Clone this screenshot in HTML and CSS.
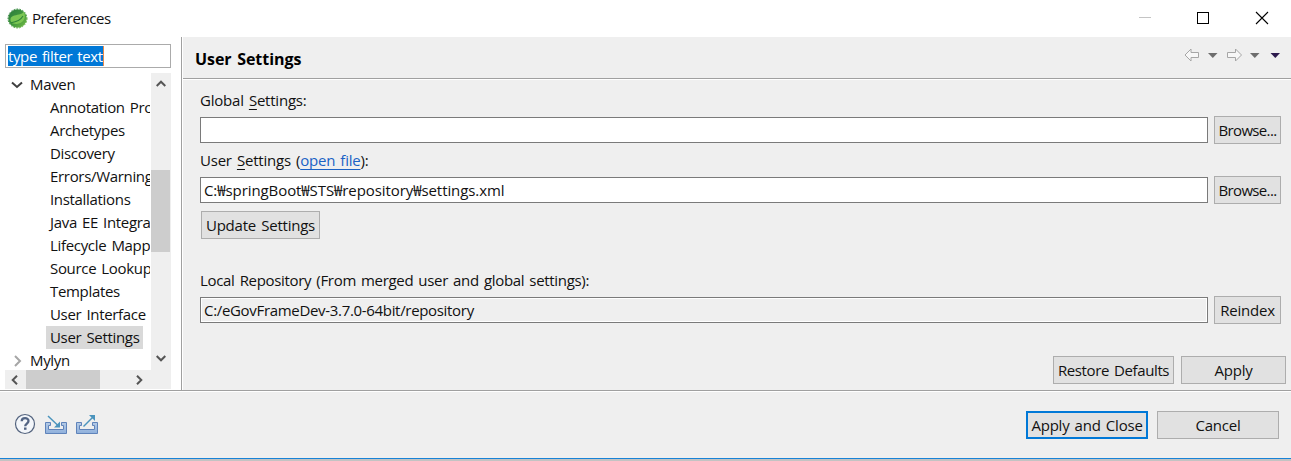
FILE: index.html
```html
<!DOCTYPE html>
<html lang="en">
<head>
<meta charset="utf-8">
<title>Preferences</title>
<link rel="stylesheet" href="styles.css">
</head>
<body>
<div class="window">
  <header class="titlebar">
    <svg class="logo" width="21" height="21" viewBox="0 0 21 21">
      <defs><linearGradient id="leaf" x1="0" y1="0" x2="1" y2="1"><stop offset="0" stop-color="#2a7a3c"/><stop offset=".5" stop-color="#3f963d"/><stop offset="1" stop-color="#76bd45"/></linearGradient></defs>
      <circle cx="10.5" cy="10.5" r="9.3" fill="url(#leaf)"/>
      <circle cx="10.5" cy="10.5" r="9.5" fill="none" stroke="url(#leaf)" stroke-width="1" stroke-dasharray="1.6 1.3"/>
      <path d="M3.500 12.500C3 7.500 8 7.500 12 6.500C14.500 6 16 5 17 3.500C19.500 10 16.500 15.500 9.500 16C7 16 5 15.500 4.500 14.800Z" fill="#7cc653"/>
      <path d="M4 14.700C9 14 13.500 12.500 16 8" fill="none" stroke="#2f8439" stroke-width="1.100"/>
    </svg>
    <span class="t-title">Preferences</span>
    <svg class="winbtns" width="130" height="14" viewBox="0 0 130 14" fill="none" shape-rendering="crispEdges">
      <path d="M0 6.500H12" stroke="#c4c4c4"/>
      <rect x="58.500" y="1.500" width="11" height="11" stroke="#000"/>
      <path d="M117 1L129 13M129 1L117 13" stroke="#000" shape-rendering="auto" stroke-width="1.100"/>
    </svg>
  </header>
  <div class="body">
    <aside class="sidebar">
      <div class="filter"><span class="selected-text">type filter text</span></div>
      <div class="tree-wrap">
        <div class="tree">
          <div class="row parent"><svg width="12" height="8" viewBox="0 0 12 8"><path d="M1 1.500L6 6L11 1.500" fill="none" stroke="#404040" stroke-width="2"/></svg><span>Maven</span></div>
          <div class="row"><span>Annotation Processing</span></div>
          <div class="row"><span>Archetypes</span></div>
          <div class="row"><span>Discovery</span></div>
          <div class="row"><span>Errors/Warnings</span></div>
          <div class="row"><span>Installations</span></div>
          <div class="row"><span>Java EE Integration</span></div>
          <div class="row"><span>Lifecycle Mappings</span></div>
          <div class="row"><span>Source Lookup</span></div>
          <div class="row"><span>Templates</span></div>
          <div class="row"><span>User Interface</span></div>
          <div class="row"><span class="current">User Settings</span></div>
          <div class="row parent"><svg width="12" height="12" viewBox="0 0 12 12"><path d="M4 1L9 6L4 11" fill="none" stroke="#a6a6a6" stroke-width="2"/></svg><span>Mylyn</span></div>
        </div>
        <div class="vscroll">
          <svg width="10" height="7" viewBox="0 0 10 7"><path d="M.7 6L5 1.700L9.300 6" fill="none" stroke="#555" stroke-width="2"/></svg>
          <div class="vthumb"></div>
          <svg width="10" height="7" viewBox="0 0 10 7"><path d="M.7 1L5 5.300L9.300 1" fill="none" stroke="#555" stroke-width="2"/></svg>
        </div>
      </div>
      <div class="hscroll">
        <svg width="7" height="10" viewBox="0 0 7 10"><path d="M6 .7L1.700 5L6 9.300" fill="none" stroke="#555" stroke-width="2"/></svg>
        <div class="hthumb"></div>
        <svg width="7" height="10" viewBox="0 0 7 10"><path d="M1 .7L5.300 5L1 9.300" fill="none" stroke="#555" stroke-width="2"/></svg>
      </div>
    </aside>
    <main class="page">
      <div class="page-head">
        <h1>User Settings</h1>
        <svg width="98" height="14" viewBox="0 0 98 14">
          <path d="M1 7L7 1V4.500H14.500V9.500H7V13Z" fill="#f7f7f7" stroke="#a6a6a6" stroke-linejoin="round"/>
          <path d="M24 5H33.500L28.800 10Z" fill="#6d6d6d"/>
          <path d="M57.500 7L51.500 1V4.500H43.500V9.500H51.500V13Z" fill="#f7f7f7" stroke="#a6a6a6" stroke-linejoin="round"/>
          <path d="M66 5H75.500L70.800 10Z" fill="#6d6d6d"/>
          <path d="M86.500 5H96L91.300 10Z" fill="#2c1a4d"/>
        </svg>
      </div>
      <div class="form">
        <label>Global <u>S</u>ettings:</label>
        <div class="line"><div class="input"></div><button class="side-btn browse">Browse...</button></div>
        <label>User <u>S</u>ettings (<a>open file</a>):</label>
        <div class="line"><div class="input t-path">C:₩springBoot₩STS₩repository₩settings.xml</div><button class="side-btn browse">Browse...</button></div>
        <button class="update">Update Settings</button>
        <label class="t-local">Local Repository (From merged user and global settings):</label>
        <div class="line"><div class="input readonly t-repo">C:/eGovFrameDev-3.7.0-64bit/repository</div><button class="side-btn">Reindex</button></div>
      </div>
      <div class="page-actions">
        <button class="restore">Restore Defaults</button><button class="apply">Apply</button>
      </div>
    </main>
  </div>
  <footer class="footer">
    <svg class="tools" width="86" height="22" viewBox="0 0 86 22">
      <defs><linearGradient id="tray" x1="0" y1="0" x2="0" y2="1"><stop offset="0" stop-color="#b5cbe6"/><stop offset="1" stop-color="#8fb0dc"/></linearGradient></defs>
      <circle cx="11" cy="11" r="9.500" fill="#f3f6fa" stroke="#53637e" stroke-width="1.200"/>
      <path d="M7.700 8.300C7.700 4.200 14.500 4.200 14.500 8C14.500 10.500 11.200 10.700 11.200 13.300" fill="none" stroke="#526484" stroke-width="2.300"/>
      <rect x="10" y="14.500" width="2.500" height="2.300" fill="#526484"/>
      <g fill="url(#tray)" stroke="#5f83ba" stroke-width="1">
        <path d="M31.500 9.500H36.500V12.500H34.500V16.500H49.500V12.500H47.500V9.500H52.500V20.500H31.500Z"/>
        <path d="M62.500 9.500H67.500V12.500H65.500V16.500H80.500V12.500H78.500V9.500H83.500V20.500H62.500Z"/>
      </g>
      <path d="M34 3L44.500 13" fill="none" stroke="#4b94bd" stroke-width="1.500"/>
      <path d="M46 14.500H40L46 8.500Z" fill="#4b94bd"/>
      <path d="M69.500 13.500L79 4" fill="none" stroke="#4b94bd" stroke-width="1.500"/>
      <path d="M81 2H75L81 8Z" fill="#4b94bd"/>
    </svg>
    <div class="dialog-actions"><button class="default">Apply and Close</button><button class="cancel">Cancel</button></div>
  </footer>
  <div class="edge"></div>
</div>
</body>
</html>
```
FILE: styles.css
```css
* { box-sizing: border-box; }
body { margin: 0; font: 15px/22px "Open Sans", "Noto Sans CJK KR", sans-serif; color: #111; letter-spacing: -0.22px; word-spacing: 1.5px; }
.window { width: 1291px; height: 461px; display: flex; flex-direction: column; background: #efefef; overflow: hidden; }
.titlebar { height: 37px; flex: none; background: #fff; display: flex; align-items: center; padding: 0 22px 0 7px; }
.logo { margin: 0 4px 1px 0; }
.t-title { letter-spacing: -0.45px; margin-bottom: 1px; }
.winbtns { margin: 0 0 1px auto; }
.body { height: 355px; flex: none; display: flex; border-bottom: 1px solid #fff; box-shadow: inset 0 -1px #a0a0a0; }
.sidebar { width: 183px; height: 353px; background: #fff; padding: 7px 0 0 5px; border-right: 1px solid #fff; box-shadow: inset -1px 0 #a0a0a0; }
.filter { display: flex; width: 166px; height: 24px; border: 1px solid #ababab; padding: 1px 2px; }
.selected-text { height: 20px; line-height: 20px; background: #0078d7; color: #fff; border-right: 1px solid #e8894a; white-space: nowrap; letter-spacing: -0.38px; }
.tree-wrap { display: flex; width: 166px; height: 297px; margin-top: 5px; }
.tree { width: 146px; padding-right: 1px; overflow: hidden; overflow: clip; overflow-clip-margin: content-box; letter-spacing: -0.32px; }
.row { height: 23px; padding-left: 41px; display: flex; align-items: center; white-space: nowrap; }
.row span { padding: 0 4px; line-height: 23px; }
.row.parent { padding-left: 6px; }
.row.parent svg { margin-right: 3px; }
.row .current { background: #d9d9d9; padding-right: 3px; }
.vscroll { width: 20px; background: #efefef; display: flex; flex-direction: column; align-items: center; padding: 7px 1px 8px 0; }
.vthumb { width: 19px; height: 82px; background: #cdcdcd; margin: 83px 0 auto; }
.hscroll { width: 166px; height: 19px; background: #efefef; display: flex; align-items: center; padding-left: 6px; }
.hthumb { width: 74px; height: 19px; background: #cdcdcd; margin: 0 36px 0 8px; }
.page { flex: 1; display: flex; flex-direction: column; }
.page-head { height: 43px; display: flex; align-items: center; justify-content: space-between; padding: 0 9px 0 12px; border-bottom: 1px solid #fff; box-shadow: inset 0 -1px #a0a0a0; }
h1 { margin: 1px 0 0; font-size: 16px; line-height: 22px; font-weight: 700; letter-spacing: -0.05px; color: #000; }
.page-head svg { margin-bottom: 6px; }
.form { padding: 9px 10px 0 17px; display: flex; flex-direction: column; align-items: flex-start; }
label { height: 22px; white-space: pre; }
.t-local { letter-spacing: -0.32px; }
.t-path { letter-spacing: -0.08px; }
.t-repo { letter-spacing: -0.32px; }
u, a { text-decoration: underline; text-underline-offset: 3px; text-decoration-thickness: 1px; text-decoration-skip-ink: none; }
a { color: #1a62c5; }
.line { width: 100%; display: flex; align-items: center; gap: 6px; margin: 5px 0; }
.input { flex: 1; height: 26px; border: 1px solid #7a7a7a; background: #fff; padding-left: 3px; line-height: 25px; white-space: nowrap; }
.readonly { background: #efefef; box-shadow: inset 0 0 0 1px #fff; }
button { height: 28px; padding: 0; border: 1px solid #adadad; background: #e1e1e1; color: #111; font: inherit; letter-spacing: inherit; word-spacing: inherit; white-space: nowrap; line-height: 26px; }
.side-btn { width: 67px; }
.browse { letter-spacing: -0.65px; }
.update { width: 119px; margin: 2px 0 30px 1px; }
.page-actions { display: flex; justify-content: flex-end; gap: 7px; padding-right: 5px; margin-top: 27px; }
.restore { width: 121px; letter-spacing: -0.38px; }
.apply { width: 105px; }
.footer { height: 66px; flex: none; display: flex; align-items: center; justify-content: space-between; padding: 0 12px 0 14px; }
.tools { margin-bottom: 2px; }
.dialog-actions { display: flex; gap: 9px; }
.default { width: 122px; border: 2px solid #0078d7; line-height: 24px; }
.cancel { width: 122px; }
.edge { height: 3px; border-top: 1px solid #1883d7; background: #c3c3c3; }
```
